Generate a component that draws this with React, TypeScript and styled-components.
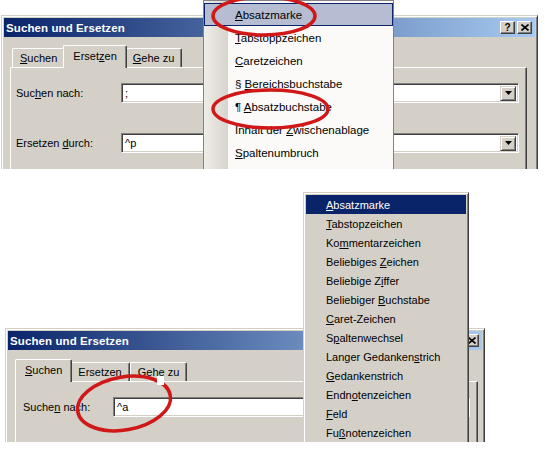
import React from 'react';
import styled, { createGlobalStyle, css } from 'styled-components';

const face = '#d4d0c8';

const GlobalStyle = createGlobalStyle`
  html, body {
    margin: 0;
    padding: 0;
    background: #fff;
  }
  body {
    width: 560px;
    height: 462px;
    overflow: hidden;
    font-family: "Liberation Sans", Arial, sans-serif;
    font-size: 11px;
    color: #000;
  }
`;

const Page = styled.div`
  display: flex;
  flex-direction: column;
  width: 560px;
`;

const Shot = styled.div<{ $h: number }>`
  position: relative;
  height: ${(p) => p.$h}px;
  overflow: hidden;
`;

const DialogFrame = styled.div<{ $top: number; $left: number; $width: number }>`
  margin: ${(p) => p.$top}px 0 0 ${(p) => p.$left}px;
  width: ${(p) => p.$width}px;
  height: 320px;
  box-sizing: border-box;
  background: ${face};
  border: 1px solid;
  border-color: ${face} #404040 #404040 ${face};
  box-shadow: inset 1px 1px #fff, inset -1px -1px #808080;
  padding: 2px;
`;

const TitleBar = styled.div`
  height: 19px;
  display: flex;
  align-items: center;
  gap: 2px;
  padding: 0 3px 0 2px;
  background: linear-gradient(to right, #0a246a, #a6caf0);
`;

const TitleText = styled.span`
  flex: 1;
  color: #fff;
  font-weight: bold;
  font-size: 11.5px;
  letter-spacing: 0.1px;
`;

const CaptionButton = styled.div`
  width: 15px;
  height: 13px;
  box-sizing: border-box;
  background: ${face};
  border: 1px solid;
  border-color: #fff #404040 #404040 #fff;
  box-shadow: inset -1px -1px #808080;
  display: flex;
  align-items: center;
  justify-content: center;
  font-weight: bold;
  font-size: 10px;
  line-height: 1;
`;

const Body = styled.div<{ $pt: number; $pl: number; $pr: number }>`
  padding: ${(p) => p.$pt}px ${(p) => p.$pr}px 0 ${(p) => p.$pl}px;
`;

const TabRow = styled.div`
  display: flex;
  align-items: flex-end;
  height: 22px;
  padding-left: 2px;
  position: relative;
  z-index: 1;
`;

const Tab = styled.div<{ $active?: boolean }>`
  height: 19px;
  padding: 0 7px;
  display: flex;
  align-items: center;
  box-sizing: border-box;
  background: ${face};
  border-top: 1px solid #fff;
  border-left: 1px solid #fff;
  border-right: 1px solid #404040;
  box-shadow: inset -1px 0 #808080;
  border-radius: 2px 2px 0 0;
  ${(p) =>
    p.$active &&
    css`
      height: 23px;
      margin: 0 -2px -1px;
      padding: 0 9px 3px;
      position: relative;
      z-index: 1;
    `}
`;

const Panel = styled.div<{ $pl: number }>`
  border: 1px solid;
  border-color: #fff #404040 #404040 #fff;
  box-shadow: inset -1px -1px #808080;
  padding: 15px 7px 60px ${(p) => p.$pl}px;
  display: flex;
  flex-direction: column;
  gap: 30px;
`;

const Row = styled.div`
  display: flex;
  align-items: center;
  height: 20px;
`;

const Label = styled.span<{ $w: number }>`
  width: ${(p) => p.$w}px;
  flex: none;
`;

const Field = styled.div`
  flex: 1;
  height: 20px;
  box-sizing: border-box;
  background: #fff;
  border: 1px solid;
  border-color: #808080 #fff #fff #808080;
  box-shadow: inset 1px 1px #404040, inset -1px -1px ${face};
  display: flex;
  align-items: center;
  padding: 0 2px 0 3px;
`;

const FieldText = styled.span`
  flex: 1;
`;

const DropButton = styled.div`
  width: 16px;
  height: 15px;
  box-sizing: border-box;
  background: ${face};
  border: 1px solid;
  border-color: ${face} #404040 #404040 ${face};
  box-shadow: inset 1px 1px #fff, inset -1px -1px #808080;
  display: flex;
  align-items: center;
  justify-content: center;
`;

const XpMenu = styled.div`
  position: absolute;
  left: 203px;
  top: 0;
  width: 191px;
  height: 175px;
  box-sizing: border-box;
  border: 1px solid #848284;
  padding: 2px 0;
  background: linear-gradient(to right, #efede8 0, #d7d4cd 24px, #fbfaf8 24px);
  z-index: 2;
`;

const XpItem = styled.div<{ $hl?: boolean }>`
  height: 23px;
  display: flex;
  align-items: center;
  padding-left: 31px;
  box-sizing: border-box;
  font-size: 11.5px;
  ${(p) =>
    p.$hl &&
    css`
      background: #b6bdd2;
      border: 1px solid #0a246a;
      padding-left: 30px;
    `}
`;

const ClassicMenu = styled.div`
  position: absolute;
  left: 303px;
  top: 23px;
  width: 166px;
  box-sizing: border-box;
  background: ${face};
  border: 1px solid;
  border-color: ${face} #404040 #404040 ${face};
  box-shadow: inset 1px 1px #fff, inset -1px -1px #808080;
  padding: 2px;
  z-index: 2;
`;

const ClassicItem = styled.div<{ $hl?: boolean }>`
  height: 19px;
  display: flex;
  align-items: center;
  padding-left: 20px;
  ${(p) =>
    p.$hl &&
    css`
      background: #0a246a;
      color: #fff;
    `}
`;

const Marks = styled.svg`
  position: absolute;
  left: 0;
  top: 0;
  z-index: 3;
  pointer-events: none;
`;

type Entry = [string, number];

// text with the access key (index) underlined; kept in one span so
// flex parents don't trim the spaces around the underlined letter
function Mn({ e }: { e: Entry }) {
  const [t, i] = e;
  if (i < 0) return <span>{t}</span>;
  return (
    <span>
      {t.slice(0, i)}
      <u>{t[i]}</u>
      {t.slice(i + 1)}
    </span>
  );
}

const xpItems: Entry[] = [
  ['Absatzmarke', 0],
  ['Tabstoppzeichen', 0],
  ['Caretzeichen', 0],
  ['§ Bereichsbuchstabe', 2],
  ['¶ Absatzbuchstabe', 2],
  ['Inhalt der Zwischenablage', 11],
  ['Spaltenumbruch', 0],
];

const classicItems: Entry[] = [
  ['Absatzmarke', 0],
  ['Tabstopzeichen', 0],
  ['Kommentarzeichen', 2],
  ['Beliebiges Zeichen', 11],
  ['Beliebige Ziffer', 11],
  ['Beliebiger Buchstabe', 11],
  ['Caret-Zeichen', 0],
  ['Spaltenwechsel', 1],
  ['Langer Gedankenstrich', 15],
  ['Gedankenstrich', 0],
  ['Endnotenzeichen', 4],
  ['Feld', 0],
  ['Fußnotenzeichen', 2],
];

function CloseGlyph() {
  return (
    <svg width="8" height="7" viewBox="0 0 8 7">
      <path d="M0.5 0.5 L7.5 6.5 M7.5 0.5 L0.5 6.5" stroke="#000" strokeWidth="1.6" />
    </svg>
  );
}

function DownArrow() {
  return (
    <svg width="7" height="4" viewBox="0 0 7 4">
      <path d="M0 0 H7 L3.5 4 Z" fill="#000" />
    </svg>
  );
}

function TitleBarRow() {
  return (
    <TitleBar>
      <TitleText>Suchen und Ersetzen</TitleText>
      <CaptionButton>?</CaptionButton>
      <CaptionButton>
        <CloseGlyph />
      </CaptionButton>
    </TitleBar>
  );
}

function InputRow(props: { label: React.ReactNode; value: string; w: number; drop?: boolean }) {
  return (
    <Row>
      <Label $w={props.w}>{props.label}</Label>
      <Field>
        <FieldText>{props.value}</FieldText>
        {props.drop && (
          <DropButton>
            <DownArrow />
          </DropButton>
        )}
      </Field>
    </Row>
  );
}

export default function App() {
  return (
    <Page>
      <GlobalStyle />

      <Shot $h={169}>
        <DialogFrame $top={15} $left={1} $width={537}>
          <TitleBarRow />
          <Body $pt={8} $pl={6} $pr={8}>
            <TabRow>
              <Tab>
                <Mn e={['Suchen', 0]} />
              </Tab>
              <Tab $active>
                <Mn e={['Ersetzen', 5]} />
              </Tab>
              <Tab>
                <Mn e={['Gehe zu', 0]} />
              </Tab>
            </TabRow>
            <Panel $pl={5}>
              <InputRow w={105} label={<Mn e={['Suchen nach:', 3]} />} value=";" drop />
              <InputRow w={105} label={<Mn e={['Ersetzen durch:', 9]} />} value="^p" drop />
            </Panel>
          </Body>
        </DialogFrame>

        <XpMenu>
          {xpItems.map((e, i) => (
            <XpItem key={e[0]} $hl={i === 0}>
              <Mn e={e} />
            </XpItem>
          ))}
        </XpMenu>

        <Marks width="560" height="169">
          <g fill="none" stroke="#d01818" strokeWidth="3.5">
            <ellipse cx="264" cy="16" rx="51" ry="19" />
            <ellipse cx="270.5" cy="109" rx="57.5" ry="19" />
          </g>
        </Marks>
      </Shot>

      <Shot $h={273}>
        <DialogFrame $top={159} $left={5} $width={480}>
          <TitleBarRow />
          <Body $pt={9} $pl={7} $pr={4}>
            <TabRow>
              <Tab $active>
                <Mn e={['Suchen', 0]} />
              </Tab>
              <Tab>
                <Mn e={['Ersetzen', -1]} />
              </Tab>
              <Tab>
                <Mn e={['Gehe zu', -1]} />
              </Tab>
            </TabRow>
            <Panel $pl={7}>
              <InputRow w={90} label={<Mn e={['Suchen nach:', 5]} />} value="^a" />
            </Panel>
          </Body>
        </DialogFrame>

        <ClassicMenu>
          {classicItems.map((e, i) => (
            <ClassicItem key={e[0]} $hl={i === 0}>
              <Mn e={e} />
            </ClassicItem>
          ))}
        </ClassicMenu>

        <Marks width="560" height="273">
          <ellipse
            cx="124"
            cy="234.5"
            rx="47"
            ry="26.5"
            transform="rotate(-10 124 234.5)"
            fill="none"
            stroke="#d01818"
            strokeWidth="3.5"
          />
          <rect x="157" y="207" width="7" height="9" fill="#fff" />
        </Marks>
      </Shot>
    </Page>
  );
}
